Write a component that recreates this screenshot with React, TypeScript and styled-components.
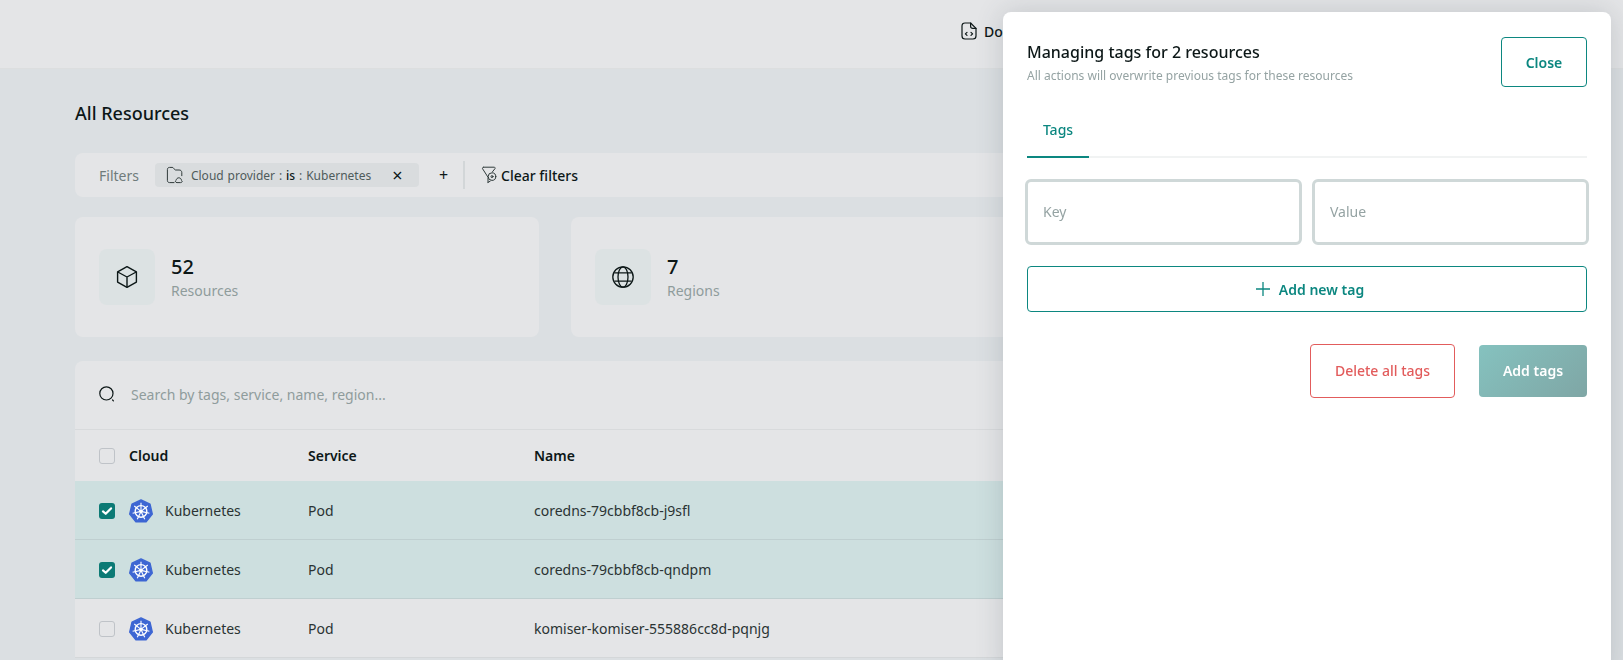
import { FC } from "react";
import styled, { createGlobalStyle } from "styled-components";

const GlobalStyle = createGlobalStyle`
  html, body {
    margin: 0;
    padding: 0;
    height: 100%;
    overflow: hidden;
    background: #dbdfe2;
    font-family: "Noto Sans", "Open Sans", sans-serif;
    color: #0c1717;
  }
  * {
    box-sizing: border-box;
  }
`;

const rows = [
  { name: "coredns-79cbbf8cb-j9sfl", selected: true },
  { name: "coredns-79cbbf8cb-qndpm", selected: true },
  { name: "komiser-komiser-555886cc8d-pqnjg", selected: false },
];

const spokes = [0, 1, 2, 3, 4, 5, 6].map((i) => {
  const a = ((-90 + (i * 360) / 7) * Math.PI) / 180;
  return { x: 12 + 8.6 * Math.cos(a), y: 12.4 + 8.6 * Math.sin(a) };
});

const KubernetesIcon: FC = () => (
  <svg width="24" height="24" viewBox="0 0 24 24">
    <polygon
      points="12,0.9 21,5.2 23.3,15.1 17.1,22.9 6.9,22.9 0.7,15.1 3,5.2"
      fill="#3d66d3"
      stroke="#3d66d3"
      strokeWidth="1.4"
      strokeLinejoin="round"
    />
    <circle cx="12" cy="12.4" r="5.8" fill="none" stroke="#fff" strokeWidth="1.4" />
    <circle cx="12" cy="12.4" r="1.7" fill="#fff" />
    {spokes.map((s) => (
      <line key={s.x} x1="12" y1="12.4" x2={s.x} y2={s.y} stroke="#fff" strokeWidth="1.1" />
    ))}
  </svg>
);

const BoxIcon: FC = () => (
  <svg width="24" height="24" viewBox="0 0 24 24" fill="none" stroke="#0c1717" strokeWidth="1.4" strokeLinejoin="round">
    <path d="M12 1.6l9.400 5.300v10.200L12 22.400l-9.400-5.300V6.900z" />
    <path d="M2.800 7L12 12l9.200-5M12 12v10.200" />
  </svg>
);

const GlobeIcon: FC = () => (
  <svg width="24" height="24" viewBox="0 0 24 24" fill="none" stroke="#0c1717" strokeWidth="1.3">
    <circle cx="12" cy="12" r="10.200" />
    <path d="M3.200 7.800h17.600M3.200 16.200h17.600" />
    <ellipse cx="12" cy="12" rx="5" ry="10.200" />
  </svg>
);

const SearchIcon: FC = () => (
  <svg width="16" height="16" viewBox="0 0 16 16" fill="none" stroke="#0c1717" strokeWidth="1.2" strokeLinecap="round">
    <circle cx="7.400" cy="7.400" r="6.600" />
    <path d="M13.600 14l.8.8" />
  </svg>
);

const FolderCloudIcon: FC = () => (
  <svg width="18" height="18" viewBox="0 0 18 18" fill="none" stroke="#2f3a3a" strokeWidth="1" strokeLinejoin="round" strokeLinecap="round">
    <path d="M8 16.600H3.600c-1.400 0-2.200-.8-2.200-2.200V3.600c0-1.400.8-2.200 2.200-2.200h2.600c.7 0 1 .2 1.400.8l1 1.300c.3.4.5.5 1 .5h3.500c1.700 0 2.700 1 2.700 2.700v3" />
    <path d="M10.600 16.600c-1.300 0-1.700-1.700-.5-2.200.2-1.600 1.400-2.600 2.700-2.600 1.400 0 2.500 1 2.700 2.600 1.200.5.8 2.200-.5 2.200z" />
  </svg>
);

const ClearFilterIcon: FC = () => (
  <svg width="16" height="18" viewBox="0 0 16 18" fill="none" stroke="#2f3a3a" strokeWidth="1" strokeLinejoin="round" strokeLinecap="round">
    <path d="M2.400 1.200h10.800c.8 0 1.200.8.8 1.400l-2.400 3M7 16.400V11.200L1.600 2.800c-.4-.7 0-1.600.8-1.600" />
    <circle cx="11" cy="10.600" r="3.800" />
    <circle cx="11" cy="10.600" r="1" />
    <path d="M7 16.400l2.200-1.200" />
  </svg>
);

const DocIcon: FC = () => (
  <svg width="16" height="18" viewBox="0 0 16 18" fill="none" stroke="#0c1717" strokeWidth="1.2" strokeLinejoin="round" strokeLinecap="round">
    <path d="M9.600 1H4C2 1 1 2 1 4v10c0 2 1 3 3 3h8c2 0 3-1 3-3V6.400z" />
    <path d="M9.600 1v3.200c0 1.400.8 2.200 2.200 2.200H15" />
    <path d="M6 10.400l-1.600 1.500L6 13.400M10 10.400l1.600 1.500L10 13.400" />
  </svg>
);

const CheckIcon: FC = () => (
  <svg width="12" height="12" viewBox="0 0 12 12" fill="none" stroke="#fff" strokeWidth="2.200" strokeLinecap="round" strokeLinejoin="round">
    <path d="M2 6.400l2.700 2.400L10 3.400" />
  </svg>
);

const App: FC = () => {
  return (
    <>
      <GlobalStyle />
      <Nav>
        <NavLink>
          <DocIcon />
          Docs
        </NavLink>
      </Nav>
      <Page>
        <PageTitle>All Resources</PageTitle>
        <FilterBar>
          <FilterLabel>Filters</FilterLabel>
          <FilterChip>
            <FolderCloudIcon />
            <ChipText>
              Cloud provider : <b>is</b> : Kubernetes
            </ChipText>
            <ChipClose>×</ChipClose>
          </FilterChip>
          <AddFilter>+</AddFilter>
          <Divider />
          <ClearFilters>
            <ClearFilterIcon />
            Clear filters
          </ClearFilters>
        </FilterBar>
        <Stats>
          <StatCard>
            <StatIcon>
              <BoxIcon />
            </StatIcon>
            <div>
              <StatValue>52</StatValue>
              <StatLabel>Resources</StatLabel>
            </div>
          </StatCard>
          <StatCard>
            <StatIcon>
              <GlobeIcon />
            </StatIcon>
            <div>
              <StatValue>7</StatValue>
              <StatLabel>Regions</StatLabel>
            </div>
          </StatCard>
        </Stats>
        <TableCard>
          <SearchRow>
            <SearchIcon />
            <SearchText>Search by tags, service, name, region...</SearchText>
          </SearchRow>
          <HeaderRow>
            <CheckBox />
            <span>Cloud</span>
            <span>Service</span>
            <span>Name</span>
          </HeaderRow>
          {rows.map((row) => (
            <Row key={row.name} $selected={row.selected}>
              <CheckBox $checked={row.selected}>{row.selected && <CheckIcon />}</CheckBox>
              <CloudCell>
                <KubernetesIcon />
                Kubernetes
              </CloudCell>
              <span>Pod</span>
              <span>{row.name}</span>
            </Row>
          ))}
        </TableCard>
      </Page>

      <Panel>
        <PanelHeader>
          <div>
            <PanelTitle>Managing tags for 2 resources</PanelTitle>
            <PanelSub>All actions will overwrite previous tags for these resources</PanelSub>
          </div>
          <CloseButton>Close</CloseButton>
        </PanelHeader>
        <Tabs>
          <Tab>Tags</Tab>
        </Tabs>
        <Inputs>
          <TagInput placeholder="Key" />
          <TagInput placeholder="Value" />
        </Inputs>
        <AddTagButton>
          <svg width="14" height="14" viewBox="0 0 14 14" stroke="#0c8780" strokeWidth="1.3">
            <path d="M7 0v14M0 7h14" />
          </svg>
          Add new tag
        </AddTagButton>
        <PanelActions>
          <DeleteButton>Delete all tags</DeleteButton>
          <SubmitButton>Add tags</SubmitButton>
        </PanelActions>
      </Panel>
    </>
  );
};

const Nav = styled.div`
  height: 69px;
  background: #e4e5e7;
  border-bottom: 1px solid #dcdedf;
  padding-left: 961px;
  display: flex;
  align-items: center;
  padding-bottom: 6px;
`;

const NavLink = styled.div`
  display: flex;
  align-items: center;
  gap: 7px;
  font-size: 14px;
  font-weight: 500;
  color: #0c1717;
`;

const Page = styled.div`
  padding: 32px 92px 0 75px;
`;

const PageTitle = styled.h1`
  margin: 0;
  font-size: 18px;
  line-height: 24px;
  font-weight: 500;
  color: #0c1717;
`;

const FilterBar = styled.div`
  margin-top: 28px;
  height: 44px;
  background: #e4e5e7;
  border-radius: 8px;
  padding-left: 24px;
  display: flex;
  align-items: center;
`;

const FilterLabel = styled.span`
  font-size: 14px;
  color: #6f7b7b;
  margin-right: 16px;
`;

const FilterChip = styled.div`
  width: 264px;
  height: 24px;
  background: #d9dcde;
  border-radius: 4px;
  padding-left: 11px;
  display: flex;
  align-items: center;
  gap: 7px;
`;

const ChipText = styled.span`
  font-size: 12px;
  color: #4f5b5b;
  white-space: nowrap;
  word-spacing: 0.8px;

  b {
    font-weight: 500;
    color: #0c1717;
  }
`;

const ChipClose = styled.span`
  font-size: 18px;
  line-height: 18px;
  color: #0c1717;
  margin-left: 14px;
`;

const AddFilter = styled.span`
  font-size: 16px;
  color: #0c1717;
  margin-left: 20px;
`;

const Divider = styled.div`
  width: 2px;
  height: 28px;
  background: #d2d6d8;
  margin-left: 15px;
`;

const ClearFilters = styled.div`
  display: flex;
  align-items: center;
  gap: 4px;
  margin-left: 16px;
  font-size: 14px;
  font-weight: 500;
  color: #0c1717;
`;

const Stats = styled.div`
  margin-top: 20px;
  display: grid;
  grid-template-columns: repeat(3, 464px);
  gap: 32px;
`;

const StatCard = styled.div`
  height: 120px;
  background: #e4e5e7;
  border-radius: 8px;
  padding: 0 24px;
  display: flex;
  align-items: center;
  gap: 16px;
`;

const StatIcon = styled.div`
  width: 56px;
  height: 56px;
  background: #dce2e3;
  border-radius: 8px;
  display: flex;
  align-items: center;
  justify-content: center;
`;

const StatValue = styled.div`
  font-size: 20px;
  line-height: 26px;
  font-weight: 500;
  color: #0c1717;
  margin-top: 1px;
`;

const StatLabel = styled.div`
  font-size: 14px;
  line-height: 20px;
  margin-top: 1px;
  color: #8f9c9c;
`;

const TableCard = styled.div`
  margin-top: 24px;
  background: #e4e5e7;
  border-radius: 8px 8px 0 0;
`;

const SearchRow = styled.div`
  height: 69px;
  padding: 0 0 2px 24px;
  display: flex;
  align-items: center;
  gap: 16px;
  border-bottom: 1px solid #d8dadc;
`;

const SearchText = styled.span`
  font-size: 14px;
  color: #8f9c9c;
`;

const HeaderRow = styled.div`
  height: 51px;
  padding-left: 24px;
  display: grid;
  grid-template-columns: 30px 179px 226px 1fr;
  align-items: center;
  font-size: 14px;
  font-weight: 600;
  color: #0c1717;
`;

const Row = styled.div<{ $selected: boolean }>`
  height: 59px;
  padding-left: 24px;
  display: grid;
  grid-template-columns: 30px 179px 226px 1fr;
  align-items: center;
  font-size: 14px;
  color: #2a3333;
  background: ${(p) => (p.$selected ? "#cddfdf" : "#e4e5e7")};
  border-bottom: 1px solid ${(p) => (p.$selected ? "#bfcfd0" : "#d4d7d9")};
`;

const CloudCell = styled.div`
  display: flex;
  align-items: center;
  gap: 12px;

  svg {
    margin-top: 1px;
  }
`;

const CheckBox = styled.div<{ $checked?: boolean }>`
  width: 16px;
  height: 16px;
  margin-top: 1px;
  border-radius: 3px;
  display: flex;
  align-items: center;
  justify-content: center;
  background: ${(p) => (p.$checked ? "#0c7a75" : "transparent")};
  border: ${(p) => (p.$checked ? "none" : "1.500px solid #bfc3c8")};
`;

const Panel = styled.div`
  position: fixed;
  top: 12px;
  right: 12px;
  bottom: -20px;
  width: 608px;
  background: #fff;
  border-radius: 8px;
  padding: 25px 24px;
  box-shadow: 0 0 28px rgba(60, 70, 80, 0.2);
`;

const PanelHeader = styled.div`
  display: flex;
  justify-content: space-between;
  align-items: flex-start;
`;

const PanelTitle = styled.div`
  font-size: 16px;
  line-height: 22px;
  font-weight: 500;
  color: #0c1717;
  margin-top: 4px;
`;

const PanelSub = styled.div`
  font-size: 12px;
  line-height: 16px;
  margin-top: 5px;
  color: #95a3a3;
`;

const CloseButton = styled.button`
  width: 86px;
  height: 50px;
  background: #fff;
  border: 1px solid #0c8780;
  border-radius: 4px;
  font-family: inherit;
  font-size: 14px;
  font-weight: 600;
  color: #0c8780;
`;

const Tabs = styled.div`
  margin-top: 17px;
  border-bottom: 2px solid #f1f3f3;
  display: flex;
`;

const Tab = styled.div`
  width: 62px;
  padding: 16px 0;
  margin-bottom: -2px;
  text-align: center;
  font-size: 14px;
  line-height: 20px;
  font-weight: 500;
  color: #0c8780;
  border-bottom: 2px solid #0c8780;
`;

const Inputs = styled.div`
  margin: 21px -2px 0;
  display: grid;
  grid-template-columns: 1fr 1fr;
  gap: 10px;
`;

const TagInput = styled.input`
  height: 66px;
  width: 100%;
  border: 3px solid #cfd8d8;
  border-radius: 6px;
  padding: 0 15px 2px;
  font-family: inherit;
  font-size: 14px;
  background: #fff;
  outline: none;

  &::placeholder {
    color: #95a3a3;
  }
`;

const AddTagButton = styled.button`
  margin-top: 21px;
  width: 100%;
  height: 46px;
  background: #fff;
  border: 1px solid #0c8780;
  border-radius: 4px;
  display: flex;
  align-items: center;
  justify-content: center;
  gap: 9px;
  padding: 0 0 0 6px;
  font-family: inherit;
  font-size: 14px;
  font-weight: 600;
  color: #0c8780;
`;

const PanelActions = styled.div`
  margin-top: 32px;
  display: flex;
  justify-content: flex-end;
  align-items: center;
  gap: 24px;
`;

const DeleteButton = styled.button`
  width: 145px;
  height: 54px;
  padding-bottom: 3px;
  background: #fff;
  border: 1px solid #e25c5c;
  border-radius: 4px;
  font-family: inherit;
  font-size: 14px;
  font-weight: 500;
  color: #e25c5c;
`;

const SubmitButton = styled.button`
  width: 108px;
  height: 52px;
  padding-bottom: 3px;
  border: none;
  border-radius: 4px;
  background: linear-gradient(135deg, #85c2bf, #7fa6a5);
  font-family: inherit;
  font-size: 14px;
  font-weight: 600;
  color: #fff;
`;

export default App;
